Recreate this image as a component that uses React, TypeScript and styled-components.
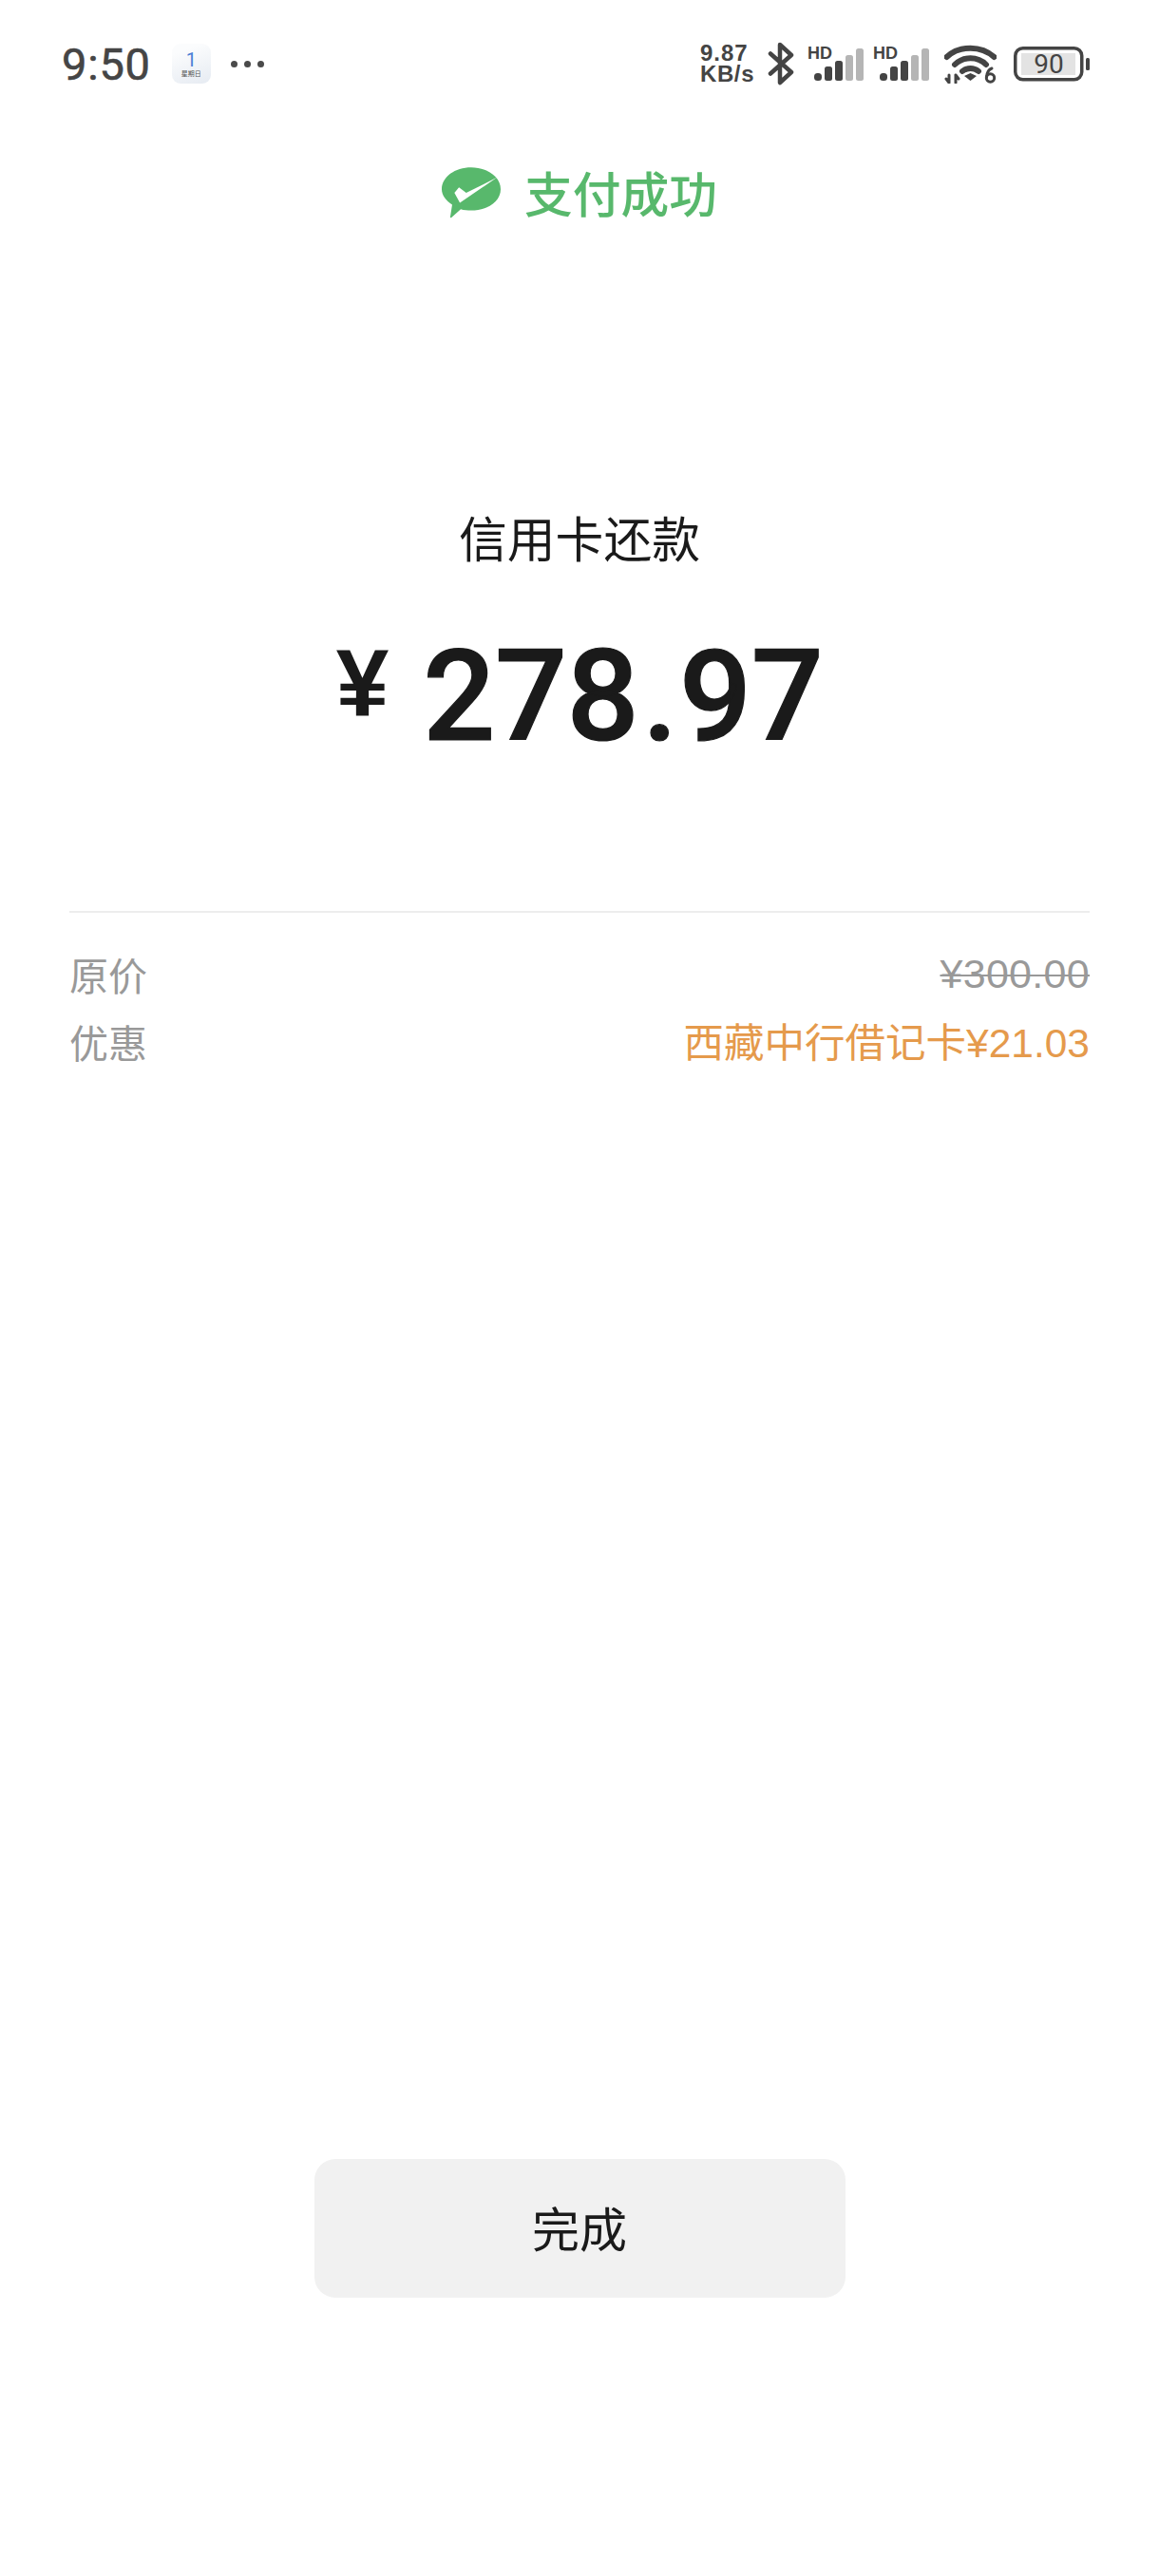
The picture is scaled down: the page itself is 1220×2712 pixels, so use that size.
import React from 'react'
import styled, { createGlobalStyle } from 'styled-components'

const GlobalStyle = createGlobalStyle`
  html, body {
    margin: 0;
    padding: 0;
    background: #fff;
  }
`

const CJK = `'Noto Sans CJK SC', 'Noto Sans', sans-serif`

const Page = styled.div`
  width: 1220px;
  height: 2712px;
  display: flex;
  flex-direction: column;
  align-items: center;
  background: #fff;
  overflow: hidden;
  font-family: ${CJK};
`

const StatusBar = styled.div`
  width: 100%;
  box-sizing: border-box;
  height: 134px;
  padding: 0 73px 0 65px;
  display: flex;
  align-items: center;
  justify-content: space-between;
  color: #444;
`

const StatusLeft = styled.div`
  display: flex;
  align-items: center;
`

const Time = styled.div`
  font-family: Roboto, sans-serif;
  font-size: 47px;
  line-height: 1;
  letter-spacing: 0.8px;
  color: #454545;
  -webkit-text-stroke: 0.6px #454545;
`

const CalendarTile = styled.div`
  width: 41px;
  height: 42px;
  margin-left: 22px;
  border-radius: 9px;
  background: linear-gradient(160deg, #fbfcfd 20%, #e6ebf2 100%);
  display: flex;
  flex-direction: column;
  align-items: center;
  justify-content: center;
`

const CalendarDay = styled.div`
  font-family: Roboto, sans-serif;
  font-size: 20px;
  line-height: 20px;
  color: #4a7fd6;
`

const CalendarWeek = styled.div`
  font-size: 7px;
  line-height: 9px;
  color: #555;
`

const Dots = styled.div`
  display: flex;
  gap: 7px;
  margin-left: 21px;
`

const Dot = styled.span`
  width: 7px;
  height: 7px;
  border-radius: 50%;
  background: #4a4a4a;
`

const StatusRight = styled.div`
  display: flex;
  align-items: center;
`

const Speed = styled.div`
  font-family: 'Liberation Sans', sans-serif;
  font-weight: 700;
  font-size: 24px;
  line-height: 22px;
  color: #444;
  width: 71px;
`

const SpeedLine = styled.div<{ $tight?: boolean }>`
  letter-spacing: ${({ $tight }) => ($tight ? '0.6px' : '1px')};
`

const SignalWrap = styled.div<{ $gap: number }>`
  position: relative;
  width: 59px;
  height: 42px;
  margin-left: ${({ $gap }) => $gap}px;
`

const HdLabel = styled.span`
  position: absolute;
  left: 0;
  top: 0;
  font-family: 'Liberation Sans', sans-serif;
  font-weight: 700;
  font-size: 18px;
  line-height: 20px;
  color: #444;
`

const IconSvg = styled.svg<{ $gap?: number; $drop?: number }>`
  display: block;
  flex-shrink: 0;
  margin-left: ${({ $gap }) => $gap ?? 0}px;
  margin-top: ${({ $drop }) => $drop ?? 0}px;
`

const BarsSvg = styled.svg`
  position: absolute;
  left: 7px;
  bottom: 3px;
`

const SuccessRow = styled.div`
  height: 70px;
  margin-top: 33px;
  display: flex;
  align-items: center;
  gap: 25px;
`

const SuccessText = styled.div`
  font-size: 50.8px;
  line-height: 70px;
  font-weight: 500;
  color: #58b86c;
`

const Subject = styled.div`
  margin-top: 293px;
  font-size: 50.8px;
  line-height: 70px;
  color: #1a1a1a;
`

const AmountRow = styled.div`
  margin-top: 59px;
  height: 150px;
  display: flex;
  align-items: flex-start;
  color: #1a1a1a;
`

const Currency = styled.span`
  font-family: 'Liberation Sans', sans-serif;
  font-weight: 700;
  font-size: 100px;
  line-height: 100px;
  margin-top: 10px;
  margin-right: 36px;
`

const Amount = styled.span`
  font-family: Roboto, sans-serif;
  font-weight: 500;
  font-size: 134px;
  line-height: 150px;
  letter-spacing: -0.5px;
  -webkit-text-stroke: 1.2px #1a1a1a;
`

const AmountDot = styled.span`
  margin: 0 2px 0 4px;
`

const Details = styled.div`
  width: 1074px;
  margin-top: 150px;
  padding-top: 35px;
  border-top: 2px solid #ededed;
  display: flex;
  flex-direction: column;
  gap: 12px;
`

const DetailRow = styled.div`
  display: flex;
  justify-content: space-between;
  align-items: center;
  height: 59px;
  font-size: 41px;
  line-height: 59px;
  color: #999;
`

const Price = styled.span`
  font-family: 'Liberation Sans', 'Noto Sans CJK SC', sans-serif;
  font-size: 43px;
  text-decoration: line-through;
  text-decoration-thickness: 2px;
  letter-spacing: 0.3px;
`

const Discount = styled.span`
  font-size: 42.5px;
  color: #e59a4c;
`

const DiscountValue = styled.span`
  font-family: 'Liberation Sans', sans-serif;
`

const DoneButton = styled.button`
  width: 559px;
  height: 146px;
  margin-top: auto;
  margin-bottom: 293px;
  border: 0;
  border-radius: 22px;
  background: #f1f1f1;
  font-family: ${CJK};
  font-size: 50px;
  color: #1a1a1a;
  padding: 0 0 5px;
`

const Signal = ({ gap }: { gap: number }) => (
  <SignalWrap $gap={gap}>
    <HdLabel>HD</HdLabel>
    <BarsSvg width="52" height="34" viewBox="0 0 52 34">
      <rect x="0" y="26" width="8" height="8" rx="3.5" fill="#444" />
      <rect x="11" y="19" width="8" height="15" rx="2.5" fill="#444" />
      <rect x="22" y="13" width="8" height="21" rx="2.5" fill="#444" />
      <rect x="33" y="7" width="8" height="27" rx="2.5" fill="#b5b5b5" />
      <rect x="44" y="0" width="8" height="34" rx="2.5" fill="#b5b5b5" />
    </BarsSvg>
  </SignalWrap>
)

const App = () => (
  <Page>
    <GlobalStyle />
    <StatusBar>
      <StatusLeft>
        <Time>9:50</Time>
        <CalendarTile>
          <CalendarDay>1</CalendarDay>
          <CalendarWeek>星期日</CalendarWeek>
        </CalendarTile>
        <Dots>
          <Dot />
          <Dot />
          <Dot />
        </Dots>
      </StatusLeft>
      <StatusRight>
        <Speed>
          <SpeedLine>9.87</SpeedLine>
          <SpeedLine $tight>KB/s</SpeedLine>
        </Speed>
        <IconSvg width="29" height="46" viewBox="0 0 29 46" fill="none" stroke="#444" strokeWidth="4.5" strokeLinecap="round" strokeLinejoin="round">
          <path d="M3 12.5 L25 32 L13 43 V3 L25 14 L3 33.5" />
        </IconSvg>
        <Signal gap={13} />
        <Signal gap={10} />
        <IconSvg $gap={16} width="55" height="42" viewBox="0 0 55 42" fill="none">
          <path d="M2.5 14 C16 1.5 39 1.5 52.5 14" stroke="#444" strokeWidth="6" strokeLinecap="round" />
          <path d="M11 22 C20 13 35 13 44 22" stroke="#444" strokeWidth="6" strokeLinecap="round" />
          <path d="M19 29 C24 25 31 25 36 29" stroke="#444" strokeWidth="6" strokeLinecap="round" />
          <path d="M21 34 L27.5 31 L34 34 L27.5 39 Z" fill="#444" />
          <path d="M5 33 V41 M2 37 L5 41 M12 33 V41 M12 33 L15 37" stroke="#444" strokeWidth="3" strokeLinecap="round" />
          <circle cx="48.5" cy="36" r="4.2" stroke="#444" strokeWidth="3" />
          <path d="M44.5 35 C45 30 47 27 50 26" stroke="#444" strokeWidth="3" strokeLinecap="round" />
        </IconSvg>
        <IconSvg $gap={18} width="80" height="37" viewBox="0 0 80 37" fill="none">
          <rect x="1.75" y="1.75" width="70" height="33" rx="8" stroke="#444" strokeWidth="3.5" />
          <rect x="8" y="7" width="57" height="23" fill="#e3e3e3" />
          <text x="37" y="28" textAnchor="middle" fontFamily="Roboto, sans-serif" fontSize="28" fill="#444">90</text>
          <rect x="76" y="12" width="4" height="13" rx="1.5" fill="#444" />
        </IconSvg>
      </StatusRight>
    </StatusBar>

    <SuccessRow>
      <IconSvg $drop={2} width="62" height="54" viewBox="0 0 65 56">
        <path d="M32.5 0 C50.5 0 65 10.5 65 24 C65 37.5 50.5 47.5 32.5 47.5 C28.5 47.5 24.5 47 21 46 L11 55 C10 56 9 55.5 9.5 54 L11.5 41 C4.5 36.5 0 30.5 0 24 C0 10.5 14.5 0 32.5 0 Z" fill="#58b86c" />
        <path d="M14 28 L19 22 L27 28 L61 11 L20 39 Z" fill="#fff" />
      </IconSvg>
      <SuccessText>支付成功</SuccessText>
    </SuccessRow>

    <Subject>信用卡还款</Subject>

    <AmountRow>
      <Currency>¥</Currency>
      <Amount>
        278<AmountDot>.</AmountDot>97
      </Amount>
    </AmountRow>

    <Details>
      <DetailRow>
        <span>原价</span>
        <Price>¥300.00</Price>
      </DetailRow>
      <DetailRow>
        <span>优惠</span>
        <Discount>
          西藏中行借记卡<DiscountValue>¥21.03</DiscountValue>
        </Discount>
      </DetailRow>
    </Details>

    <DoneButton>完成</DoneButton>
  </Page>
)

export default App
